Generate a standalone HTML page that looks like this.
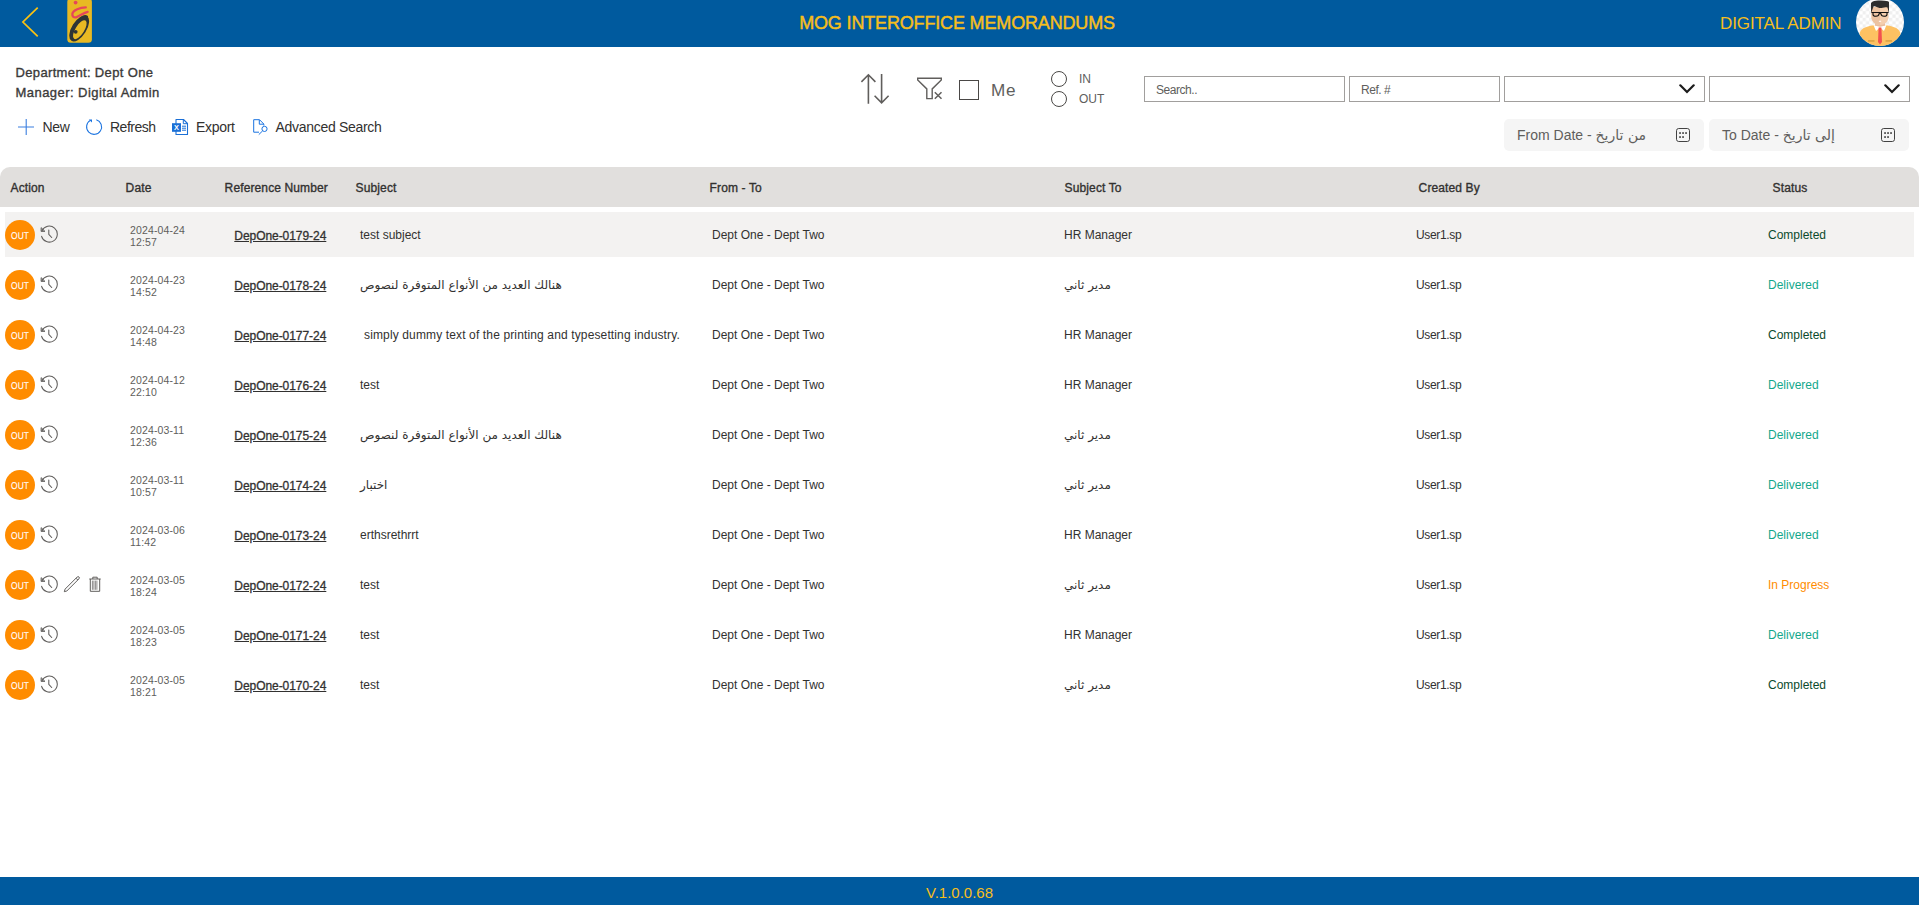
<!DOCTYPE html>
<html lang="en"><head><meta charset="utf-8"><title>MOG Interoffice Memorandums</title>
<style>
*{box-sizing:border-box;margin:0;padding:0}
html,body{width:1919px;height:905px;overflow:hidden;background:#fff}
body{position:relative;font-family:"Liberation Sans","DejaVu Sans",sans-serif;color:#323130;font-size:12px}
.abs,.t,.ic{position:absolute}
.t{white-space:nowrap;line-height:1}
.sb6{font-weight:normal;-webkit-text-stroke:.35px currentColor}
#hdr{position:absolute;left:0;top:0;width:1919px;height:47px;background:#005a9e;overflow:hidden}
#ftr{position:absolute;left:0;top:877px;width:1919px;height:28px;background:#005a9e}
.gold{color:#f6be1c}
#title{left:799.2px;top:14px;font-size:18px;letter-spacing:-.16px;-webkit-text-stroke:.45px currentColor}
#user{left:1720px;top:15px;font-size:17px;letter-spacing:-.1px}
#ver{left:926px;top:884.5px;font-size:15px}
.dep{font-size:13px;color:#3b3a39;left:15.500px;letter-spacing:.35px}
.cmd{font-size:14px;color:#323130;top:120px;letter-spacing:-.3px}
.inp{position:absolute;top:76px;height:26px;border:1px solid #a19f9d;background:#fff}
.ph{font-size:12px;color:#605e5c;top:84px;letter-spacing:-.45px}
.rad{left:1051px;width:16px;height:16px;border:1px solid #4a4846;border-radius:50%;background:#fff}
.dtf{position:absolute;top:119px;height:32px;width:200px;background:#f5f5f5;border-radius:5px}
.dtt{font-size:14px;color:#605e5c;top:128px}
#th{position:absolute;left:0;top:167px;width:1919px;height:40px;background:#e1dfdd;border-radius:10px 10px 0 0}
#th .t{top:15px;font-size:12px;color:#323130;letter-spacing:.12px;margin-left:.6px}
.row{position:absolute;left:5px;width:1909px;height:45px}
.row.sel{background:#f3f2f1}
.row .t{top:17px;font-size:12px}
.out{position:absolute;left:0;top:8px;width:30px;height:30px;border-radius:50%;background:#ff8c00;color:#fff;text-align:center}
.out b{display:block;font-size:9.9px;line-height:33px;font-weight:normal;transform:scaleX(0.855);text-rendering:geometricPrecision;-webkit-text-stroke:.1px #fff}
.hi{left:35px;top:13.3px;width:18px;height:18px}
.pe{left:58.2px;top:13.2px;width:18px;height:18px}
.tr{left:84.2px;top:14.3px;width:12px;height:16px}
.row .dt{left:125px;top:12px;font-size:10.500px;line-height:12px;color:#605e5c;letter-spacing:.13px}
.row .rf{left:275.3px;transform:translateX(-50%);top:18px;text-decoration:underline;color:#323130;font-weight:normal;-webkit-text-stroke:.3px currentColor;letter-spacing:-.05px}
.row .sb{left:355px}
.row .sb.s3{left:359px;letter-spacing:.135px}
.row .ft{left:707px}
.row .st{left:1059px}
.row .cb{left:1411px;letter-spacing:-.35px}
.row .ss{left:1763px}
.ar{font-family:"DejaVu Sans",sans-serif}
.c{color:#0b4a2c}.d{color:#13a88c}.p{color:#ff8c00}

</style></head>
<body>
<svg width="0" height="0" style="position:absolute"><defs>
<g id="i-hist" fill="none" stroke="#605e5c" stroke-width="1.05" stroke-linecap="round" stroke-linejoin="round"><path d="M2 5.800A8 8 0 1 1 1.600 11.300"/><path d="M1.1 3V6.4H4.600Z" fill="#605e5c" fill-opacity=".55" stroke-width=".9"/><path d="M8.800 4.900V9.300L11.700 12.500"/></g>
<g id="i-pen" fill="none" stroke="#605e5c" stroke-width="1" stroke-linejoin="round"><path d="M1.3 16.7L2.1 14.1L14.2 2A1.2 1.2 0 0 1 16 3.8L3.9 15.9Z"/><path d="M13 3.2L14.8 5"/></g>
<g id="i-trash" fill="none" stroke="#605e5c" stroke-width="1"><path d="M0.3 3H11.7M3.8 3V1.2H8.2V3M1.3 3V15.3H10.7V3"/><path d="M3.4 4.6V13.8M4.9 4.6V13.8M6.4 4.6V13.8M7.9 4.6V13.8" stroke-width="0.9" opacity=".8"/></g>
<g id="i-cal" fill="none" stroke="#424242"><rect x="0.5" y="0.5" width="13" height="13" rx="2.2"/><g fill="#424242" stroke="none"><rect x="3.2" y="4.2" width="1.7" height="1.7"/><rect x="6.2" y="4.2" width="1.7" height="1.7"/><rect x="9.2" y="4.2" width="1.7" height="1.7"/><rect x="3.2" y="8.2" width="1.7" height="1.7"/><rect x="6.2" y="8.2" width="1.7" height="1.7"/></g></g>
<g id="i-chev"><path d="M1.3 2.3L8 9L14.7 2.3" fill="none" stroke="#1b1b1b" stroke-width="2.2" stroke-linecap="round" stroke-linejoin="miter"/></g>
<pattern id="chk" width="6.6" height="6.6" patternUnits="userSpaceOnUse"><rect width="6.6" height="6.6" fill="#fff"/><rect width="3.3" height="3.3" fill="#efefef"/><rect x="3.3" y="3.3" width="3.3" height="3.3" fill="#efefef"/></pattern>
<clipPath id="avc"><circle cx="24" cy="24" r="24"/></clipPath>
</defs></svg>

<div id="hdr">
<svg class="abs" style="left:20px;top:5px" width="22" height="34" viewBox="0 0 22 34"><path d="M17.7 2.6L2.9 17L17.7 31.4" fill="none" stroke="#fdc210" stroke-width="1.7"/></svg>
<svg class="abs" style="left:67px;top:0" width="26" height="44" viewBox="0 0 26 44">
<rect x="0.3" y="-1.6" width="24.6" height="44.4" rx="3.6" fill="#e8b923"/>
<circle cx="8.6" cy="2.6" r="1.9" fill="#e6465a"/>
<path d="M18.8 7.4C13 7.7 6.2 10 5.4 13.6C4.9 16.6 7 18 9.6 17.1C13.2 15.4 17.6 12.6 20.6 11.8" fill="none" stroke="#e6465a" stroke-width="2.3" stroke-linecap="round"/>
<g transform="translate(12.2 28.4) rotate(-58)"><ellipse rx="14.6" ry="7.3" fill="#2d3436"/><ellipse cx="-0.8" cy="1.2" rx="10.8" ry="4.4" fill="#e8b923"/></g>
<path d="M13.5 18.5C16 16.3 18.5 15.8 20 16.6" fill="none" stroke="#2d3436" stroke-width="2.2" stroke-linecap="round"/>
<circle cx="8.7" cy="31.8" r="1.9" fill="#2d3436"/>
</svg>
<span class="t gold sb6" id="title">MOG INTEROFFICE MEMORANDUMS</span>
<span class="t gold" id="user">DIGITAL ADMIN</span>
<svg class="abs" style="left:1856px;top:-2px" width="48" height="48" viewBox="0 0 48 48"><g clip-path="url(#avc)">
<rect width="48" height="48" fill="url(#chk)"/>
<path d="M3.5 36C4 31 9 29 16 27.6L24 26.5L32 27.6C39 29 44 31 44.5 36V48H3.500Z" fill="#fdc162"/>
<path d="M17.5 27L24 28.5L30.500 27L28 33L24 29.500L20 33Z" fill="#fff"/>
<path d="M22.600 29.500H25.400L26 44L24 46.500L22 44Z" fill="#f25050"/>
<rect x="12" y="42.2" width="6.500" height="1.500" fill="#d9a040"/><rect x="29.500" y="42.2" width="6.500" height="1.500" fill="#d9a040"/>
<path d="M19 22H29V27.500Q24 29.500 19 27.500Z" fill="#e8bd9e"/>
<path d="M15.500 9H32.500V19.500C32.500 23.500 28.500 27 24 27C19.500 27 15.500 23.500 15.500 19.500Z" fill="#f5cfae"/>
<path d="M15.500 9H24V27C19.500 27 15.500 23.500 15.500 19.500Z" fill="#ecc2a0"/>
<path d="M15 15.500V5C17 2.500 21 2.200 25 2.600C29 3 32 3 33 4V15.500L31.500 9.500C28 8.500 26 10.500 23.500 10C21 9.500 19 7.500 17.500 8.500Z" fill="#2d2d2d"/>
<path d="M15.500 14.500H32.500M17 14.800V16.500Q17 18.300 20 18.300Q22.800 18.300 23.200 15.500L24 15L24.800 15.500Q25.200 18.300 28 18.300Q31 18.300 31 16.500V14.800" fill="none" stroke="#111" stroke-width="1.1"/>
<rect x="22.800" y="22.700" width="2.400" height="1.100" rx=".5" fill="#fff"/>
</g></svg>
</div>
<span class="t dep sb6" style="top:66px">Department: Dept One</span>
<span class="t dep sb6" style="top:86px;letter-spacing:.45px">Manager: Digital Admin</span>

<svg class="abs" style="left:17px;top:118px" width="18" height="18" viewBox="0 0 18 18"><path d="M1 9H17M9.200 1V17" stroke="#3b7fe0" stroke-width="1.1" fill="none"/></svg>
<span class="t cmd" style="left:42.500px">New</span>
<svg class="abs" style="left:85px;top:118px" width="18" height="18" viewBox="0 0 18 18"><path d="M11.300 1.700A7.500 7.500 0 1 1 5.300 2.400" fill="none" stroke="#1a73e0" stroke-width="1.050"/><path d="M3.800 1.400H7V4.600Z" fill="#1a73e0"/></svg>
<span class="t cmd" style="left:110px;letter-spacing:-.5px">Refresh</span>
<svg class="abs" style="left:171px;top:118px" width="18" height="18" viewBox="0 0 18 18"><path d="M5 1.500H12.500L16.500 5.500V16.500H5Z" fill="#fff" stroke="#1a6fd6" stroke-width="1.100" stroke-linejoin="round"/><path d="M12.300 1.700V5.700H16.300" fill="none" stroke="#1a6fd6" stroke-width="1"/><path d="M11 8.200H15M11 10.200H15M11 12.200H15" stroke="#1a6fd6" stroke-width="1"/><rect x="1" y="5.200" width="9" height="8.600" fill="#1a6fd6"/><text x="5.500" y="12.200" font-family="Liberation Sans,sans-serif" font-weight="bold" font-size="7.4" fill="#fff" text-anchor="middle">X</text></svg>
<span class="t cmd" style="left:196px">Export</span>
<svg class="abs" style="left:252px;top:118px" width="18" height="18" viewBox="0 0 18 18"><path d="M7 14.200H1.700V1.700H7.500L11.800 6V7.500" fill="none" stroke="#1a73e0" stroke-width="1"/><path d="M7.300 1.900V6.200H11.600" fill="none" stroke="#1a73e0" stroke-width="1"/><circle cx="12.500" cy="10.900" r="2.600" fill="none" stroke="#1a73e0" stroke-width="1"/><path d="M10.600 12.900L6.800 16.600" stroke="#1a73e0" stroke-width="1"/></svg>
<span class="t cmd" style="left:275.500px">Advanced Search</span>

<svg class="abs" style="left:858px;top:70px" width="36" height="38" viewBox="0 0 36 38"><path d="M10.400 33.800V4.800M3.400 11.900L10.400 4.800L17.400 11.900M23.600 4.100V32.500M16.600 25.800L23.600 32.800L30.600 25.800" fill="none" stroke="#605e5c" stroke-width="1.600"/></svg>
<svg class="abs" style="left:914px;top:74px" width="32" height="30" viewBox="0 0 32 30"><path d="M3.700 4.300H27.300V6L18.200 14.900V24.600H12.800V14.900L3.700 6Z" fill="none" stroke="#605e5c" stroke-width="1.400" stroke-linejoin="miter"/><path d="M20.800 18.200L27.500 24.800M27.500 18.200L20.800 24.800" stroke="#605e5c" stroke-width="1.500"/></svg>
<div class="abs" style="left:959px;top:80px;width:20px;height:20px;border:1px solid #4a4846;background:#fff"></div>
<span class="t" style="left:991.3px;top:83px;font-size:16px;color:#605e5c;letter-spacing:.6px;transform:scaleX(1.07);transform-origin:0 0">Me</span>
<div class="abs rad" style="top:71px"></div>
<div class="abs rad" style="top:91px"></div>
<span class="t" style="left:1079px;top:73px;font-size:12px;color:#605e5c">IN</span>
<span class="t" style="left:1079px;top:93px;font-size:12px;color:#605e5c">OUT</span>
<div class="inp" style="left:1144px;width:201px"></div><span class="t ph" style="left:1156px">Search..</span>
<div class="inp" style="left:1349px;width:151px"></div><span class="t ph" style="left:1361px">Ref. #</span>
<div class="inp" style="left:1504px;width:201px"></div><svg class="abs" style="left:1679px;top:82.5px" width="16" height="11" viewBox="0 0 16 11"><use href="#i-chev"/></svg>
<div class="inp" style="left:1709px;width:201px"></div><svg class="abs" style="left:1884px;top:82.5px" width="16" height="11" viewBox="0 0 16 11"><use href="#i-chev"/></svg>
<div class="dtf" style="left:1504px"></div><span class="t dtt" style="left:1517px">From Date - <span class="ar">من تاريخ</span></span><svg class="abs" style="left:1676px;top:128px" width="14" height="14" viewBox="0 0 14 14"><use href="#i-cal"/></svg>
<div class="dtf" style="left:1709px"></div><span class="t dtt" style="left:1722px">To Date - <span class="ar">إلى تاريخ</span></span><svg class="abs" style="left:1881px;top:128px" width="14" height="14" viewBox="0 0 14 14"><use href="#i-cal"/></svg>
<div id="th">
<span class="t sb6" style="left:10px">Action</span>
<span class="t sb6" style="left:125px">Date</span>
<span class="t sb6" style="left:224px">Reference Number</span>
<span class="t sb6" style="left:355px">Subject</span>
<span class="t sb6" style="left:709px">From - To</span>
<span class="t sb6" style="left:1064px">Subject To</span>
<span class="t sb6" style="left:1418px">Created By</span>
<span class="t sb6" style="left:1772px">Status</span>
</div>
<div class="row sel" style="top:212px">
<span class="out"><b>OUT</b></span><svg class="ic hi" viewBox="0 0 18 18"><use href="#i-hist"/></svg>
<span class="t dt">2024-04-24<br>12:57</span>
<a class="t rf">DepOne-0179-24</a>
<span class="t sb">test subject</span>
<span class="t ft">Dept One - Dept Two</span>
<span class="t st">HR Manager</span>
<span class="t cb">User1.sp</span>
<span class="t ss c">Completed</span>
</div>
<div class="row" style="top:262px">
<span class="out"><b>OUT</b></span><svg class="ic hi" viewBox="0 0 18 18"><use href="#i-hist"/></svg>
<span class="t dt">2024-04-23<br>14:52</span>
<a class="t rf">DepOne-0178-24</a>
<span class="t sb ar">هنالك العديد من الأنواع المتوفرة لنصوص</span>
<span class="t ft">Dept One - Dept Two</span>
<span class="t st ar">مدير ثاني</span>
<span class="t cb">User1.sp</span>
<span class="t ss d">Delivered</span>
</div>
<div class="row" style="top:312px">
<span class="out"><b>OUT</b></span><svg class="ic hi" viewBox="0 0 18 18"><use href="#i-hist"/></svg>
<span class="t dt">2024-04-23<br>14:48</span>
<a class="t rf">DepOne-0177-24</a>
<span class="t sb s3">simply dummy text of the printing and typesetting industry.</span>
<span class="t ft">Dept One - Dept Two</span>
<span class="t st">HR Manager</span>
<span class="t cb">User1.sp</span>
<span class="t ss c">Completed</span>
</div>
<div class="row" style="top:362px">
<span class="out"><b>OUT</b></span><svg class="ic hi" viewBox="0 0 18 18"><use href="#i-hist"/></svg>
<span class="t dt">2024-04-12<br>22:10</span>
<a class="t rf">DepOne-0176-24</a>
<span class="t sb">test</span>
<span class="t ft">Dept One - Dept Two</span>
<span class="t st">HR Manager</span>
<span class="t cb">User1.sp</span>
<span class="t ss d">Delivered</span>
</div>
<div class="row" style="top:412px">
<span class="out"><b>OUT</b></span><svg class="ic hi" viewBox="0 0 18 18"><use href="#i-hist"/></svg>
<span class="t dt">2024-03-11<br>12:36</span>
<a class="t rf">DepOne-0175-24</a>
<span class="t sb ar">هنالك العديد من الأنواع المتوفرة لنصوص</span>
<span class="t ft">Dept One - Dept Two</span>
<span class="t st ar">مدير ثاني</span>
<span class="t cb">User1.sp</span>
<span class="t ss d">Delivered</span>
</div>
<div class="row" style="top:462px">
<span class="out"><b>OUT</b></span><svg class="ic hi" viewBox="0 0 18 18"><use href="#i-hist"/></svg>
<span class="t dt">2024-03-11<br>10:57</span>
<a class="t rf">DepOne-0174-24</a>
<span class="t sb ar">اختبار</span>
<span class="t ft">Dept One - Dept Two</span>
<span class="t st ar">مدير ثاني</span>
<span class="t cb">User1.sp</span>
<span class="t ss d">Delivered</span>
</div>
<div class="row" style="top:512px">
<span class="out"><b>OUT</b></span><svg class="ic hi" viewBox="0 0 18 18"><use href="#i-hist"/></svg>
<span class="t dt">2024-03-06<br>11:42</span>
<a class="t rf">DepOne-0173-24</a>
<span class="t sb">erthsrethrrt</span>
<span class="t ft">Dept One - Dept Two</span>
<span class="t st">HR Manager</span>
<span class="t cb">User1.sp</span>
<span class="t ss d">Delivered</span>
</div>
<div class="row" style="top:562px">
<span class="out"><b>OUT</b></span><svg class="ic hi" viewBox="0 0 18 18"><use href="#i-hist"/></svg><svg class="ic pe" viewBox="0 0 18 18"><use href="#i-pen"/></svg><svg class="ic tr" viewBox="0 0 12 16"><use href="#i-trash"/></svg>
<span class="t dt">2024-03-05<br>18:24</span>
<a class="t rf">DepOne-0172-24</a>
<span class="t sb">test</span>
<span class="t ft">Dept One - Dept Two</span>
<span class="t st ar">مدير ثاني</span>
<span class="t cb">User1.sp</span>
<span class="t ss p">In Progress</span>
</div>
<div class="row" style="top:612px">
<span class="out"><b>OUT</b></span><svg class="ic hi" viewBox="0 0 18 18"><use href="#i-hist"/></svg>
<span class="t dt">2024-03-05<br>18:23</span>
<a class="t rf">DepOne-0171-24</a>
<span class="t sb">test</span>
<span class="t ft">Dept One - Dept Two</span>
<span class="t st">HR Manager</span>
<span class="t cb">User1.sp</span>
<span class="t ss d">Delivered</span>
</div>
<div class="row" style="top:662px">
<span class="out"><b>OUT</b></span><svg class="ic hi" viewBox="0 0 18 18"><use href="#i-hist"/></svg>
<span class="t dt">2024-03-05<br>18:21</span>
<a class="t rf">DepOne-0170-24</a>
<span class="t sb">test</span>
<span class="t ft">Dept One - Dept Two</span>
<span class="t st ar">مدير ثاني</span>
<span class="t cb">User1.sp</span>
<span class="t ss c">Completed</span>
</div>
<div id="ftr"></div>
<span class="t gold" id="ver">V.1.0.0.68</span>

</body></html>
